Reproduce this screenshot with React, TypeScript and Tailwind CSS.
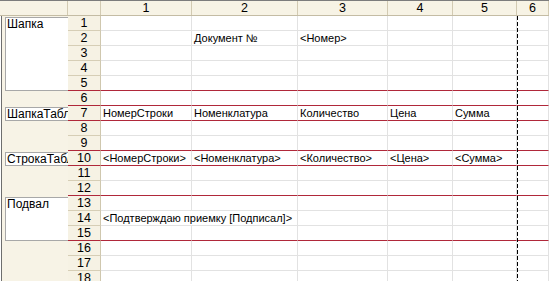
const COLS = [
  { n: "1", w: "w-[91px]" },
  { n: "2", w: "w-[106px]" },
  { n: "3", w: "w-[90px]" },
  { n: "4", w: "w-[65px]" },
  { n: "5", w: "w-[64px]" },
  { n: "6", w: "flex-1" },
];

const CELLS: Record<number, Record<number, string>> = {
  2: { 1: "Документ №", 2: "<Номер>" },
  7: { 0: "НомерСтроки", 1: "Номенклатура", 2: "Количество", 3: "Цена", 4: "Сумма" },
  10: { 0: "<НомерСтроки>", 1: "<Номенклатура>", 2: "<Количество>", 3: "<Цена>", 4: "<Сумма>" },
  14: { 0: "<Подтверждаю приемку [Подписал]>" },
};

// rows whose bottom edge is a section boundary
const RED = [5, 6, 7, 9, 10, 12, 15];

const GROUPS = [
  { label: "Шапка", h: "h-[75px]" },
  { gap: "h-[15px]" },
  { label: "ШапкаТаблицы", h: "h-[15px]" },
  { gap: "h-[30px]" },
  { label: "СтрокаТаблицы", h: "h-[15px]" },
  { gap: "h-[30px]" },
  { label: "Подвал", h: "h-[45px]" },
];

function Row({ n }: { n: number }) {
  const red = RED.includes(n);
  const cells = CELLS[n] || {};
  return (
    <div className="flex h-[15px]">
      <div
        className={`w-[33px] shrink-0 border-r border-b border-r-[#cfc7ae] bg-[#f6f2e4] text-center leading-[14px] text-[12.5px] ${
          red ? "border-b-[#b0283a]" : "border-b-[#d6ceb6]"
        }`}
      >
        {n}
      </div>
      {COLS.map((c, i) => {
        const spill = n === 14 && i === 0;
        return (
          <div
            key={c.n}
            className={`${c.w} shrink-0 border-b pl-[2px] leading-[14px] text-[11px] whitespace-nowrap ${
              spill ? "" : "border-r overflow-hidden"
            } ${red ? "border-b-[#b0283a]" : "border-b-[#e2e2e2]"} border-r-[#e2e2e2]`}
          >
            {cells[i]}
          </div>
        );
      })}
    </div>
  );
}

export default function App() {
  const rows = Array.from({ length: 18 }, (_, i) => i + 1);
  return (
    <div className="relative w-[549px] h-[281px] overflow-hidden bg-white text-[12px] text-black font-['Liberation_Sans',Arial,sans-serif]">
      {/* HEADER */}
      <div className="flex h-[16px] border-t border-t-[#7c7c7c] border-b border-b-[#c4bca4] bg-[#f7f3e5] leading-[14px] text-[12.5px]">
        <div className="w-[68px] shrink-0 border-r border-r-[#d2cab2]" />
        <div className="w-[33px] shrink-0 border-r border-r-[#d2cab2]" />
        {COLS.map((c) => (
          <div key={c.n} className={`${c.w} shrink-0 border-r border-r-[#d2cab2] text-center`}>
            {c.n}
          </div>
        ))}
      </div>

      <div className="flex">
        {/* GROUPS */}
        <div className="w-[67px] ml-[1px] shrink-0 border-l border-l-[#6e6e6e] bg-[#f7f3e6] h-[270px]">
          {GROUPS.map((g, i) =>
            g.label ? (
              <div key={i} className={`${g.h} pl-[3px] pt-[1px]`}>
                <div className="h-full bg-white border border-[#a8a8a8] border-r-0 pl-[1px] leading-[12px] whitespace-nowrap overflow-hidden">
                  {g.label}
                </div>
              </div>
            ) : (
              <div key={i} className={g.gap} />
            )
          )}
        </div>

        {/* SHEET */}
        <div className="flex-1">
          {rows.map((n) => (
            <Row key={n} n={n} />
          ))}
        </div>
      </div>

      {/* page break */}
      <div className="absolute left-[517px] top-[16px] bottom-0 w-px bg-[repeating-linear-gradient(to_bottom,#000_0,#000_4px,transparent_4px,transparent_6px)]" />
    </div>
  );
}
